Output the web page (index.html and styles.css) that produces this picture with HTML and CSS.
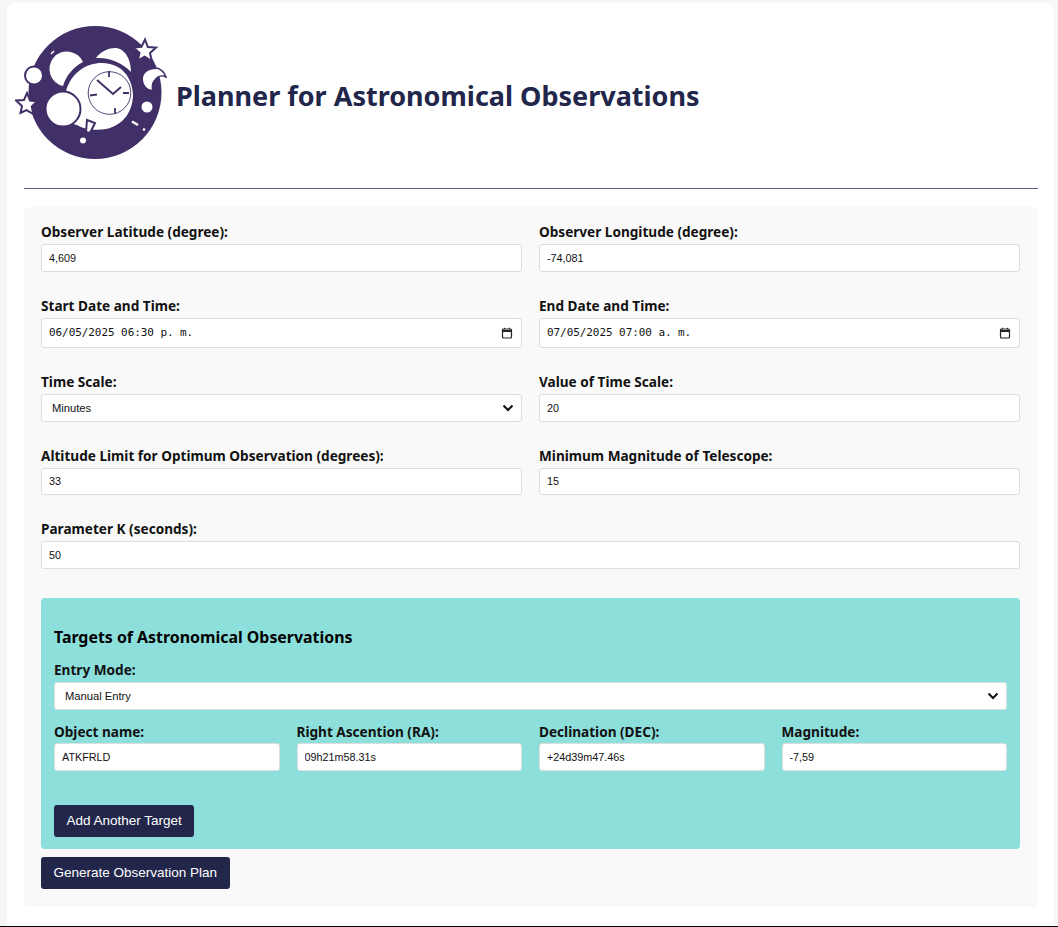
FILE: index.html
```html
<!DOCTYPE html>
<html lang="en">
<head>
<meta charset="utf-8">
<title>Planner for Astronomical Observations</title>
<link rel="stylesheet" href="styles.css">
</head>
<body>
<main class="card">
  <header class="header">
    <svg class="logo" viewBox="14 24 152 138" width="152" height="138" aria-hidden="true">
      <circle cx="94" cy="92.500" r="66.500" fill="#412f68"/>
      <circle cx="33" cy="75.500" r="9" fill="#fff" stroke="#412f68" stroke-width="2"/>
      <path d="M82 62A17.500 17.500 0 1 0 62 86C65 76 72 67 82 62z" fill="#fff"/>
      <path d="M95 58C100 51 108 48 114 48C123 48 130 58 130 72C122 63 108 57 95 58z" fill="#fff"/>
      <path d="M65 91c5-18 20-28 36-28 19 0 30 14 31 31 0 17-9 31-27 35-11 2-23 0-29-4-4 0-9-6-11-9 6-4 9-12 5-19-1-3-3-5-5-6z" fill="#fff"/>
      <circle cx="62" cy="109" r="17.500" fill="#fff" stroke="#412f68" stroke-width="2"/>
      <circle cx="108.500" cy="93" r="21.300" fill="#fff" stroke="#412f68" stroke-width=".9"/>
      <path d="M96 80 112 94 120 87" fill="none" stroke="#412f68" stroke-width="2"/>
      <path d="M108 71v6M128 93h-6M114 108v6M89 95.500l7-1" fill="none" stroke="#412f68" stroke-width="1.800"/>
      <path d="m144 39.500 2.800 7.500 8.200.5-6 5.500 1.800 8-7.200-4.300-6.800 3.800 1.700-7.700-6-5.300 8-.8z" fill="#fff" stroke="#412f68" stroke-width="2"/>
      <path d="m26 93 3 7.500 7 .7-5.200 5.300 1.500 7.500-6.800-3.800-6 2.800 1.500-7-6-5.500 8-.5z" fill="#fff" stroke="#412f68" stroke-width="2"/>
      <path d="M156 69c5 3 8 5 9 8-4-2-8-1-11 2-3 3-4 6-3 11-5-1-9-5-9-11 0-6 5-10 14-10z" fill="#fff"/>
      <path d="M156 68c3 1 7 3 9 9-4-2-8-1-10 2-3 3-4 7-3 12l-3-1" fill="none" stroke="#412f68" stroke-width="1.500"/>
      <circle cx="146" cy="107" r="5.500" fill="#fff"/>
      <circle cx="82" cy="140.500" r="3" fill="#fff"/>
      <circle cx="143" cy="129.500" r="1.300" fill="#fff"/>
      <path d="m131 121.500 6 3.500" stroke="#fff" stroke-width="2.500"/>
      <path d="m50 54 3-3" stroke="#fff" stroke-width="1.500"/>
      <path d="m86 120 8 3-5 10-4-1z" fill="#fff" stroke="#412f68" stroke-width="2"/>
    </svg>
    <h1 class="title">Planner for Astronomical Observations</h1>
  </header>
  <hr class="rule">
  <form class="panel">
    <div class="grid">
      <div class="field">
        <label class="label">Observer Latitude (degree):</label>
        <input class="control" type="text" value="4,609">
      </div>
      <div class="field">
        <label class="label">Observer Longitude (degree):</label>
        <input class="control" type="text" value="-74,081">
      </div>
      <div class="field">
        <label class="label">Start Date and Time:</label>
        <div class="control date"><span class="date-text">06/05/2025 06:30 p. m.</span>
          <svg class="cal" viewBox="0 0 12 12" width="12" height="12" aria-hidden="true"><rect x="1.500" y="2" width="9" height="9" rx="1" fill="none" stroke="#222" stroke-width="1.200"/><path d="M1.500 4h9" stroke="#222" stroke-width="2"/><path d="M3.500 .8v1.500M8.500 .8v1.500" stroke="#222"/></svg>
        </div>
      </div>
      <div class="field">
        <label class="label">End Date and Time:</label>
        <div class="control date"><span class="date-text">07/05/2025 07:00 a. m.</span>
          <svg class="cal" viewBox="0 0 12 12" width="12" height="12" aria-hidden="true"><rect x="1.500" y="2" width="9" height="9" rx="1" fill="none" stroke="#222" stroke-width="1.200"/><path d="M1.500 4h9" stroke="#222" stroke-width="2"/><path d="M3.500 .8v1.500M8.500 .8v1.500" stroke="#222"/></svg>
        </div>
      </div>
      <div class="field">
        <label class="label">Time Scale:</label>
        <div class="control select"><span>Minutes</span>
          <svg class="chev" viewBox="0 0 12 8" width="12" height="8" aria-hidden="true"><path d="M1.500 1.500 6 6l4.500-4.500" fill="none" stroke="#111" stroke-width="2"/></svg>
        </div>
      </div>
      <div class="field">
        <label class="label">Value of Time Scale:</label>
        <input class="control" type="text" value="20">
      </div>
      <div class="field">
        <label class="label">Altitude Limit for Optimum Observation (degrees):</label>
        <input class="control" type="text" value="33">
      </div>
      <div class="field">
        <label class="label">Minimum Magnitude of Telescope:</label>
        <input class="control" type="text" value="15">
      </div>
      <div class="field wide">
        <label class="label">Parameter K (seconds):</label>
        <input class="control" type="text" value="50">
      </div>
    </div>
    <section class="targets">
      <h2 class="targets-title">Targets of Astronomical Observations</h2>
      <div class="field entry">
        <label class="label">Entry Mode:</label>
        <div class="control select"><span>Manual Entry</span>
          <svg class="chev" viewBox="0 0 12 8" width="12" height="8" aria-hidden="true"><path d="M1.500 1.500 6 6l4.500-4.500" fill="none" stroke="#111" stroke-width="2"/></svg>
        </div>
      </div>
      <div class="target-row">
        <div class="field"><label class="label">Object name:</label><input class="control" type="text" value="ATKFRLD"></div>
        <div class="field"><label class="label">Right Ascention (RA):</label><input class="control" type="text" value="09h21m58.31s"></div>
        <div class="field"><label class="label">Declination (DEC):</label><input class="control" type="text" value="+24d39m47.46s"></div>
        <div class="field"><label class="label">Magnitude:</label><input class="control" type="text" value="-7,59"></div>
      </div>
      <button class="btn add" type="button">Add Another Target</button>
    </section>
    <button class="btn" type="button">Generate Observation Plan</button>
  </form>
</main>
</body>
</html>
```
FILE: styles.css
```css
* { box-sizing: border-box; }
html, body { margin: 0; height: 927px; overflow: hidden; }
body {
  background: #f6f6f6;
  padding: 3px 4px 0 7px;
  font-family: "Noto Sans", sans-serif;
  border-bottom: 1px solid #000;
}
.card {
  background: #fff;
  height: 100%;
  border-radius: 8px 8px 0 0;
  padding: 0 16px 0 17px;
}
.header {
  display: flex;
  align-items: center;
  height: 185px;
  margin-left: -9px;
  padding-top: 3px;
}
.logo { flex: none; margin-top: -8px; }
.title {
  margin: -4px 0 0 9px;
  font-size: 27px;
  font-weight: 700;
  color: #22264b;
}
.rule { margin: 0; border: 0; height: 1px; background: #5c5f7a; }
.panel {
  margin-top: 18px;
  background: #f9f9f9;
  border-radius: 4px;
  padding: 17px 18px 18px 17px;
}
.grid {
  display: grid;
  grid-template-columns: minmax(0, 1fr) minmax(0, 1fr);
  column-gap: 17px;
  row-gap: 26px;
}
.wide { grid-column: 1 / -1; }
.field { display: flex; flex-direction: column; gap: 5px; min-width: 0; }
.label {
  font-size: 13.600px;
  font-weight: 700;
  line-height: 15px;
  color: #111;
}
.control {
  display: block;
  width: 100%;
  height: 27.750px;
  padding: 0 7px;
  background: #fff;
  border: 1px solid #ddd;
  border-radius: 3px;
  font: 10.800px "Liberation Sans", sans-serif;
  color: #111;
}
.date {
  height: 30px;
  display: flex;
  align-items: center;
  justify-content: space-between;
  padding-right: 8px;
}
.date-text { font: 11px "DejaVu Sans Mono", monospace; letter-spacing: -.07px; }
.select {
  display: flex;
  align-items: center;
  justify-content: space-between;
  padding: 0 7px 0 10px;
  font-size: 11.200px;
}
.targets {
  margin-top: 29px;
  background: #8cdfdb;
  border-radius: 4px;
  padding: 30px 13px 12px;
}
.targets-title {
  margin: 0 0 15px;
  font-size: 15.900px;
  line-height: 19px;
  font-weight: 700;
  color: #000;
}
.entry { margin-bottom: 14px; }
.target-row {
  display: grid;
  grid-template-columns: repeat(4, minmax(0, 1fr));
  column-gap: 17px;
}
.target-row .field { gap: 4px; }
.btn {
  display: block;
  height: 32px;
  padding: 0 12.500px;
  background: #22264b;
  color: #fff;
  border: 0;
  border-radius: 3px;
  font: 13.500px "Liberation Sans", sans-serif;
}
.add { margin-top: 34px; }
.targets + .btn { margin-top: 8px; }
```
